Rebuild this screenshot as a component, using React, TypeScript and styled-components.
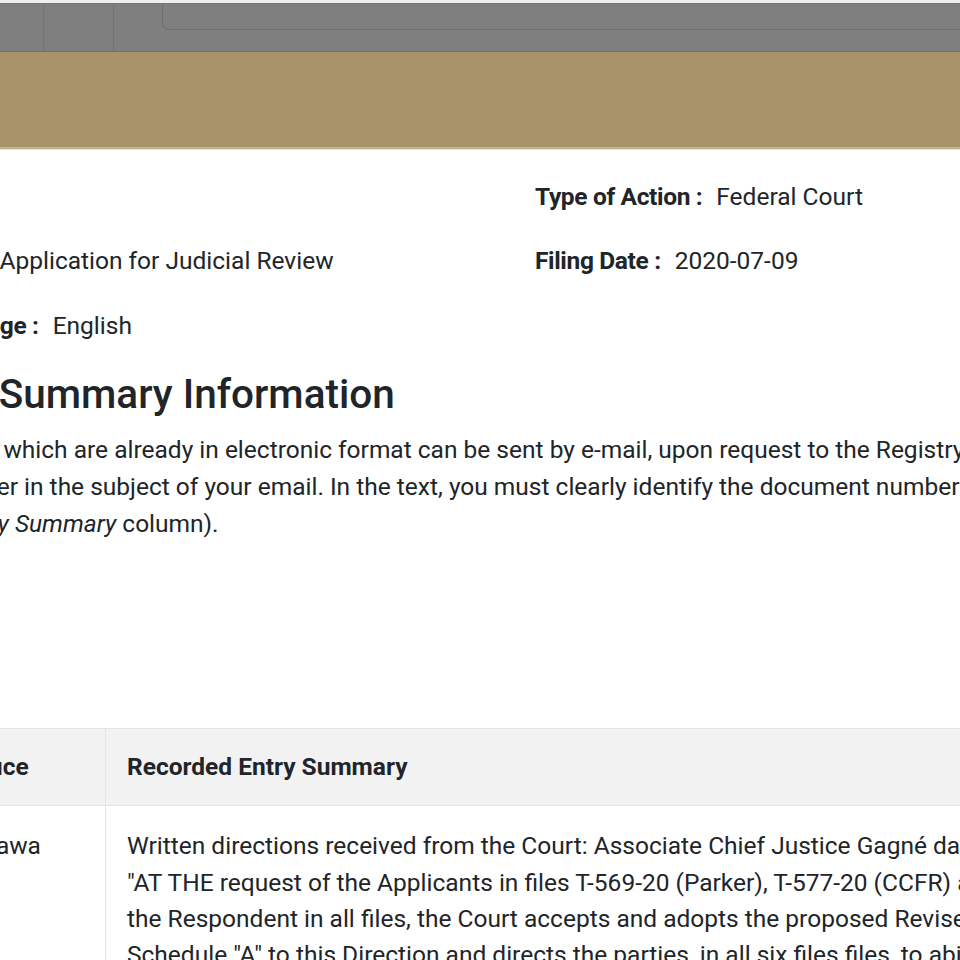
import * as React from "react";
import styled, { createGlobalStyle } from "styled-components";

const GlobalStyle = createGlobalStyle`
  html, body {
    margin: 0;
    padding: 0;
    background: #ffffff;
    overflow: hidden;
  }
  body {
    font-family: Roboto, "Liberation Sans", Arial, sans-serif;
    color: #212529;
  }
`;

const TopStrip = styled.div`
  height: 3px;
  background: #eeeeee;
`;

const NavBar = styled.div`
  display: flex;
  align-items: flex-start;
  height: 47px;
  background: #7f7f7f;
  border-top: 1px solid #767676;
  border-bottom: 1px solid #6c6c6c;
`;

interface NavTabProps {
    w: number;
}

const NavTab = styled.div<NavTabProps>`
  width: ${(props) => props.w}px;
  height: 100%;
  box-sizing: border-box;
  border-right: 1px solid #737373;
`;

const SearchField = styled.div`
  flex: 1;
  height: 25px;
  margin-left: 48px;
  border: 1px solid #6f6f6f;
  border-top: none;
  border-right: none;
  border-bottom-left-radius: 7px;
`;

const Banner = styled.div`
  height: 95px;
  background: #a8936a;
  border-bottom: 2px solid #c4b48a;
  box-shadow: 0 1px 0 #e4e2dc;
`;

const Content = styled.main`
  margin-left: -79px;
  font-size: 24.5px;
  line-height: 36.75px;
`;

const InfoGrid = styled.div`
  display: grid;
  grid-template-columns: 614px 1fr;
  row-gap: 27.5px;
  margin-top: 30px;
  white-space: nowrap;
`;

const InfoItem = styled.div`
  min-height: 36.75px;
`;

const Label = styled.span`
  font-weight: 700;
  letter-spacing: -0.35px;
  margin-right: 14px;
`;

const Heading = styled.h2`
  margin: 26px 0 0;
  font-size: 40.5px;
  line-height: 48px;
  font-weight: 500;
  white-space: nowrap;
`;

const Notice = styled.div`
  margin-top: 14px;
`;

const Line = styled.div`
  white-space: nowrap;
`;

const TableSection = styled.section`
  margin-top: 185px;
  padding-left: 20px;
`;

const Table = styled.table`
  border-collapse: collapse;
  table-layout: fixed;
  width: 1500px;
  white-space: nowrap;
`;

const HeadCell = styled.th`
  background: #f2f2f2;
  text-align: left;
  font-weight: 700;
  padding: 20px 21px;
  border: 1px solid #e2e4e8;
  vertical-align: top;
`;

const Cell = styled.td`
  padding: 22px 21px 20px;
  border: 1px solid #e2e4e8;
  vertical-align: top;
  line-height: 36.4px;
`;

const OfficeCol = styled.col`
  width: 164px;
`;

const info = [
    { left: null, right: { label: "Type of Action :", value: "Federal Court" } },
    { left: { label: "Type :", value: "Application for Judicial Review" }, right: { label: "Filing Date :", value: "2020-07-09" } },
    { left: { label: "Language :", value: "English" }, right: null },
];

const entryLines = [
    "Written directions received from the Court: Associate Chief Justice Gagné dated 2021-03-10 directing that",
    "\"AT THE request of the Applicants in files T-569-20 (Parker), T-577-20 (CCFR) and T-581-20 (Generoux) and",
    "the Respondent in all files, the Court accepts and adopts the proposed Revised Timetable attached as",
    "Schedule \"A\" to this Direction and directs the parties, in all six files files, to abide by it.\"",
];

export default function App() {
    return (
        <>
            <GlobalStyle />
            <TopStrip />
            <NavBar>
                <NavTab w={44} />
                <NavTab w={70} />
                <SearchField />
            </NavBar>
            <Banner />
            <Content>
                <InfoGrid>
                    {info.map((row, i) => (
                        <React.Fragment key={i}>
                            <InfoItem>
                                {row.left && (
                                    <>
                                        <Label>{row.left.label}</Label>
                                        {row.left.value}
                                    </>
                                )}
                            </InfoItem>
                            <InfoItem>
                                {row.right && (
                                    <>
                                        <Label>{row.right.label}</Label>
                                        {row.right.value}
                                    </>
                                )}
                            </InfoItem>
                        </React.Fragment>
                    ))}
                </InfoGrid>
                <Heading>Top Summary Information</Heading>
                <Notice>
                    <Line>Papers which are already in electronic format can be sent by e-mail, upon request to the Registry.</Line>
                    <Line>{"(\u2009number"} in the subject of your email. In the text, you must clearly identify the document number</Line>
                    <Line>
                        (in <em>Entry Summary</em> column).
                    </Line>
                </Notice>
                <TableSection>
                    <Table>
                        <colgroup>
                            <OfficeCol />
                            <col />
                        </colgroup>
                        <thead>
                            <tr>
                                <HeadCell>Office</HeadCell>
                                <HeadCell>Recorded Entry Summary</HeadCell>
                            </tr>
                        </thead>
                        <tbody>
                            <tr>
                                <Cell>Ottawa</Cell>
                                <Cell>
                                    {entryLines.map((l, i) => (
                                        <Line key={i}>{l}</Line>
                                    ))}
                                </Cell>
                            </tr>
                        </tbody>
                    </Table>
                </TableSection>
            </Content>
        </>
    );
}
